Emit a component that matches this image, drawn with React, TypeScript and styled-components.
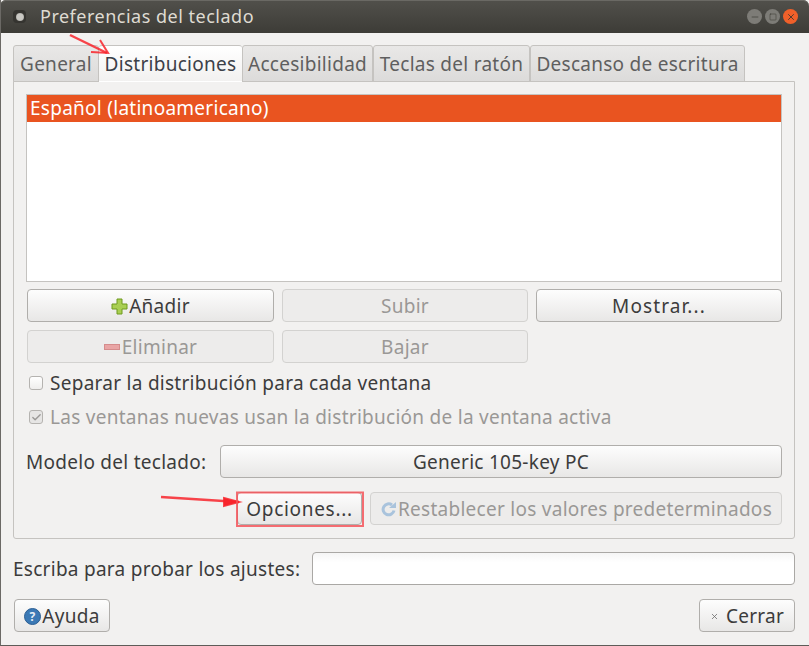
import React from "react";
import styled, { createGlobalStyle } from "styled-components";
import { Check, Minus, Square, X } from "lucide-react";

const GlobalStyle = createGlobalStyle`
  html, body {
    margin: 0;
    padding: 0;
    background: #f2f1f0;
  }
  * {
    box-sizing: border-box;
  }
`;

const Window = styled.div`
  position: relative;
  width: 809px;
  height: 646px;
  overflow: hidden;
  background: #f2f1f0;
  border-left: 1px solid #6b6965;
  border-bottom: 1px solid #5e5c58;
  font-family: "Noto Sans", "Open Sans", sans-serif;
  font-size: 19px;
  letter-spacing: 0.27px;
  color: #3c3c3c;
`;

const TitleBar = styled.header`
  display: flex;
  align-items: center;
  height: 33px;
  margin-left: -1px;
  padding: 0 11px 0 13px;
  background: linear-gradient(#51504b, #3d3c37);
  border-radius: 6px 6px 0 0;
  box-shadow: inset 0 1px 0 #6a6964;
`;

const MenuIcon = styled.span`
  display: flex;
  align-items: center;
  justify-content: center;
  width: 13px;
  height: 13px;
  margin-right: 14px;
  border-radius: 4px;
  background: #353430;
`;

const MenuDot = styled.span`
  width: 8px;
  height: 8px;
  border-radius: 50%;
  background: radial-gradient(circle, #c9c8c3 0 50%, #8c8b86 100%);
`;

const WindowTitle = styled.span`
  flex: 1;
  margin-bottom: 2px;
  font-size: 18px;
  letter-spacing: 0.5px;
  color: #dfdbd2;
`;

const WindowControls = styled.div`
  display: flex;
  gap: 3px;
`;

const WindowControl = styled.span<{ $close?: boolean }>`
  display: flex;
  align-items: center;
  justify-content: center;
  width: 15px;
  height: 15px;
  border-radius: 50%;
  color: #35342f;
  background: ${(p) => (p.$close ? "#f0602a" : "#7d7c77")};
`;

const Content = styled.main`
  display: flex;
  flex-direction: column;
  padding: 12px 13px 0 12px;
  width: 807px;
`;

const TabStrip = styled.div`
  display: flex;
  height: 37px;
  margin-bottom: -1px;
`;

const Tab = styled.div<{ $active?: boolean; $width: number }>`
  position: relative;
  z-index: ${(p) => (p.$active ? 1 : 0)};
  width: ${(p) => p.$width}px;
  display: flex;
  align-items: center;
  justify-content: center;
  padding-top: 1px;
  border: 1px solid #c5c3c0;
  border-left-width: ${(p) => (p.$active ? 0 : 1)}px;
  border-right-width: ${(p) => (p.$active ? 0 : 1)}px;
  border-bottom-color: ${(p) => (p.$active ? "#fff" : "#c5c3c0")};
  border-radius: 3px 3px 0 0;
  color: ${(p) => (p.$active ? "#3c4048" : "#5f5f5f")};
  background: ${(p) =>
    p.$active ? "linear-gradient(#fff, #f2f1f0)" : "linear-gradient(#e9e8e7, #dcdbda)"};
`;

const Panel = styled.section`
  height: 458px;
  padding: 12px 12px 0;
  border: 1px solid #c5c3c0;
  border-radius: 0 0 3px 3px;
`;

const LayoutList = styled.div`
  height: 188px;
  background: #fff;
  border: 1px solid #c5c3c0;
`;

const LayoutRow = styled.div`
  height: 27px;
  line-height: 27px;
  padding-left: 3px;
  color: #fff;
  background: #e95420;
`;

const ButtonGrid = styled.div`
  display: grid;
  grid-template-columns: 247px 246px 246px;
  gap: 8px;
  margin: 7px 0 0 1px;
`;

const Button = styled.div<{ $disabled?: boolean; $width?: number; $tracking?: number }>`
  display: flex;
  align-items: center;
  justify-content: center;
  height: 33px;
  width: ${(p) => (p.$width ? `${p.$width}px` : "auto")};
  padding-top: 1px;
  border: 1px solid ${(p) => (p.$disabled ? "#d3d2d0" : "#b0aeab")};
  border-radius: 4px;
  letter-spacing: ${(p) => p.$tracking ?? 0.27}px;
  color: ${(p) => (p.$disabled ? "#9a9896" : "#3c3c3c")};
  background: ${(p) =>
    p.$disabled ? "#edeceb" : "linear-gradient(#fdfdfd, #e8e7e6)"};
`;

const CheckRow = styled.div<{ $disabled?: boolean }>`
  display: flex;
  align-items: center;
  gap: 7px;
  height: 20px;
  margin-left: 3px;
  color: ${(p) => (p.$disabled ? "#9a9896" : "#3c3c3c")};
`;

const CheckOptions = styled.div`
  display: flex;
  flex-direction: column;
  gap: 14px;
  margin-top: 10px;
`;

const CheckBox = styled.span<{ $disabled?: boolean }>`
  display: flex;
  align-items: center;
  justify-content: center;
  width: 14px;
  height: 14px;
  border: 1px solid #b5b3b0;
  border-radius: 3px;
  color: #9a9896;
  background: ${(p) => (p.$disabled ? "#e6e5e4" : "linear-gradient(#fff, #efeeed)")};
`;

const ModelRow = styled.div`
  display: flex;
  align-items: center;
  justify-content: space-between;
  margin-top: 18px;
`;

const ActionRow = styled.div`
  display: flex;
  justify-content: flex-end;
  gap: 8px;
  margin-top: 14px;
`;

const TestRow = styled.div`
  display: flex;
  align-items: center;
  justify-content: space-between;
  margin-top: 13px;
`;

const TestInput = styled.div`
  width: 483px;
  height: 33px;
  background: linear-gradient(#f5f5f5, #fff 30%);
  border: 1px solid #aaa8a5;
  border-radius: 4px;
`;

const Footer = styled.footer`
  display: flex;
  justify-content: space-between;
  margin: 14px 0 0 1px;
`;

const ButtonIcon = styled.svg`
  flex: none;
  margin-right: 1px;
`;

const CloseMark = styled(X)`
  margin-right: 7px;
  color: #666;
`;

// red marks somebody drew on top of the screenshot
const Annotation = styled.svg`
  position: absolute;
  z-index: 2;
  left: -1px;
  top: 0;
  pointer-events: none;
`;

const App = () => {
  return (
    <Window>
      <GlobalStyle />
      <TitleBar>
        <MenuIcon>
          <MenuDot />
        </MenuIcon>
        <WindowTitle>Preferencias del teclado</WindowTitle>
        <WindowControls>
          <WindowControl>
            <Minus size={10} strokeWidth={1.5} />
          </WindowControl>
          <WindowControl>
            <Square size={8} strokeWidth={1.5} />
          </WindowControl>
          <WindowControl $close>
            <X size={10} strokeWidth={2} />
          </WindowControl>
        </WindowControls>
      </TitleBar>
      <Content>
        <TabStrip>
          <Tab $width={86}>General</Tab>
          <Tab $width={143} $active>
            Distribuciones
          </Tab>
          <Tab $width={131}>Accesibilidad</Tab>
          <Tab $width={157}>Teclas del ratón</Tab>
          <Tab $width={215}>Descanso de escritura</Tab>
        </TabStrip>
        <Panel>
          <LayoutList>
            <LayoutRow>Español (latinoamericano)</LayoutRow>
          </LayoutList>
          <ButtonGrid>
            <Button>
              <ButtonIcon width="17" height="17" viewBox="0 0 17 17">
                <path
                  d="M6 1h5v5h5v5h-5v5H6v-5H1V6h5z"
                  fill="#a9cf52"
                  stroke="#6f9a1e"
                />
              </ButtonIcon>
              Añadir
            </Button>
            <Button $disabled>Subir</Button>
            <Button $tracking={1.1}>Mostrar...</Button>
            <Button $disabled>
              <ButtonIcon width="17" height="7" viewBox="0 0 17 7">
                <rect x="0.5" y="0.5" width="15" height="5" fill="#e9a5a5" stroke="#d58c8c" />
              </ButtonIcon>
              Eliminar
            </Button>
            <Button $disabled>Bajar</Button>
          </ButtonGrid>
          <CheckOptions>
            <CheckRow>
              <CheckBox />
              Separar la distribución para cada ventana
            </CheckRow>
            <CheckRow $disabled>
              <CheckBox $disabled>
                <Check size={11} strokeWidth={3} />
              </CheckBox>
              Las ventanas nuevas usan la distribución de la ventana activa
            </CheckRow>
          </CheckOptions>
          <ModelRow>
            <span>Modelo del teclado:</span>
            <Button $width={562}>Generic 105-key PC</Button>
          </ModelRow>
          <ActionRow>
            <Button $width={125} $tracking={0.7}>
              Opciones...
            </Button>
            <Button $disabled $width={412}>
              <ButtonIcon width="17" height="17" viewBox="0 0 17 17">
                <path
                  d="M14 9.5a5.5 5.5 0 1 1-2-5.5"
                  fill="none"
                  stroke="#a9c3dc"
                  strokeWidth="3"
                />
                <path d="M9 7h7V1z" fill="#a9c3dc" />
              </ButtonIcon>
              Restablecer los valores predeterminados
            </Button>
          </ActionRow>
        </Panel>
        <TestRow>
          <span>Escriba para probar los ajustes:</span>
          <TestInput />
        </TestRow>
        <Footer>
          <Button $width={96}>
            <ButtonIcon width="17" height="17" viewBox="0 0 17 17">
              <circle cx="8.5" cy="8.5" r="8" fill="#3b79b5" stroke="#2c5f94" />
              <text
                x="8.5"
                y="13"
                textAnchor="middle"
                fontSize="12"
                fontWeight="700"
                fill="#e6eef6"
              >
                ?
              </text>
            </ButtonIcon>
            Ayuda
          </Button>
          <Button $width={96}>
            <CloseMark size={9} strokeWidth={2} />
            Cerrar
          </Button>
        </Footer>
      </Content>
      <Annotation width="809" height="646" viewBox="0 0 809 646">
        <g stroke="#f8252c" fill="none" strokeOpacity="0.85">
          <path d="M70 35l37 18" strokeWidth="2.5" />
          <path d="M100 40l8 13-17 -1" strokeWidth="2" />
          <path d="M161 497l78 5" strokeWidth="2.5" />
          <path d="M224 498l15 4-15 4z" strokeWidth="2" fill="#f8252c" />
          <rect x="237" y="492.5" width="126" height="33.5" strokeWidth="2" stroke="#f4555a" />
        </g>
      </Annotation>
    </Window>
  );
};

export default App;
